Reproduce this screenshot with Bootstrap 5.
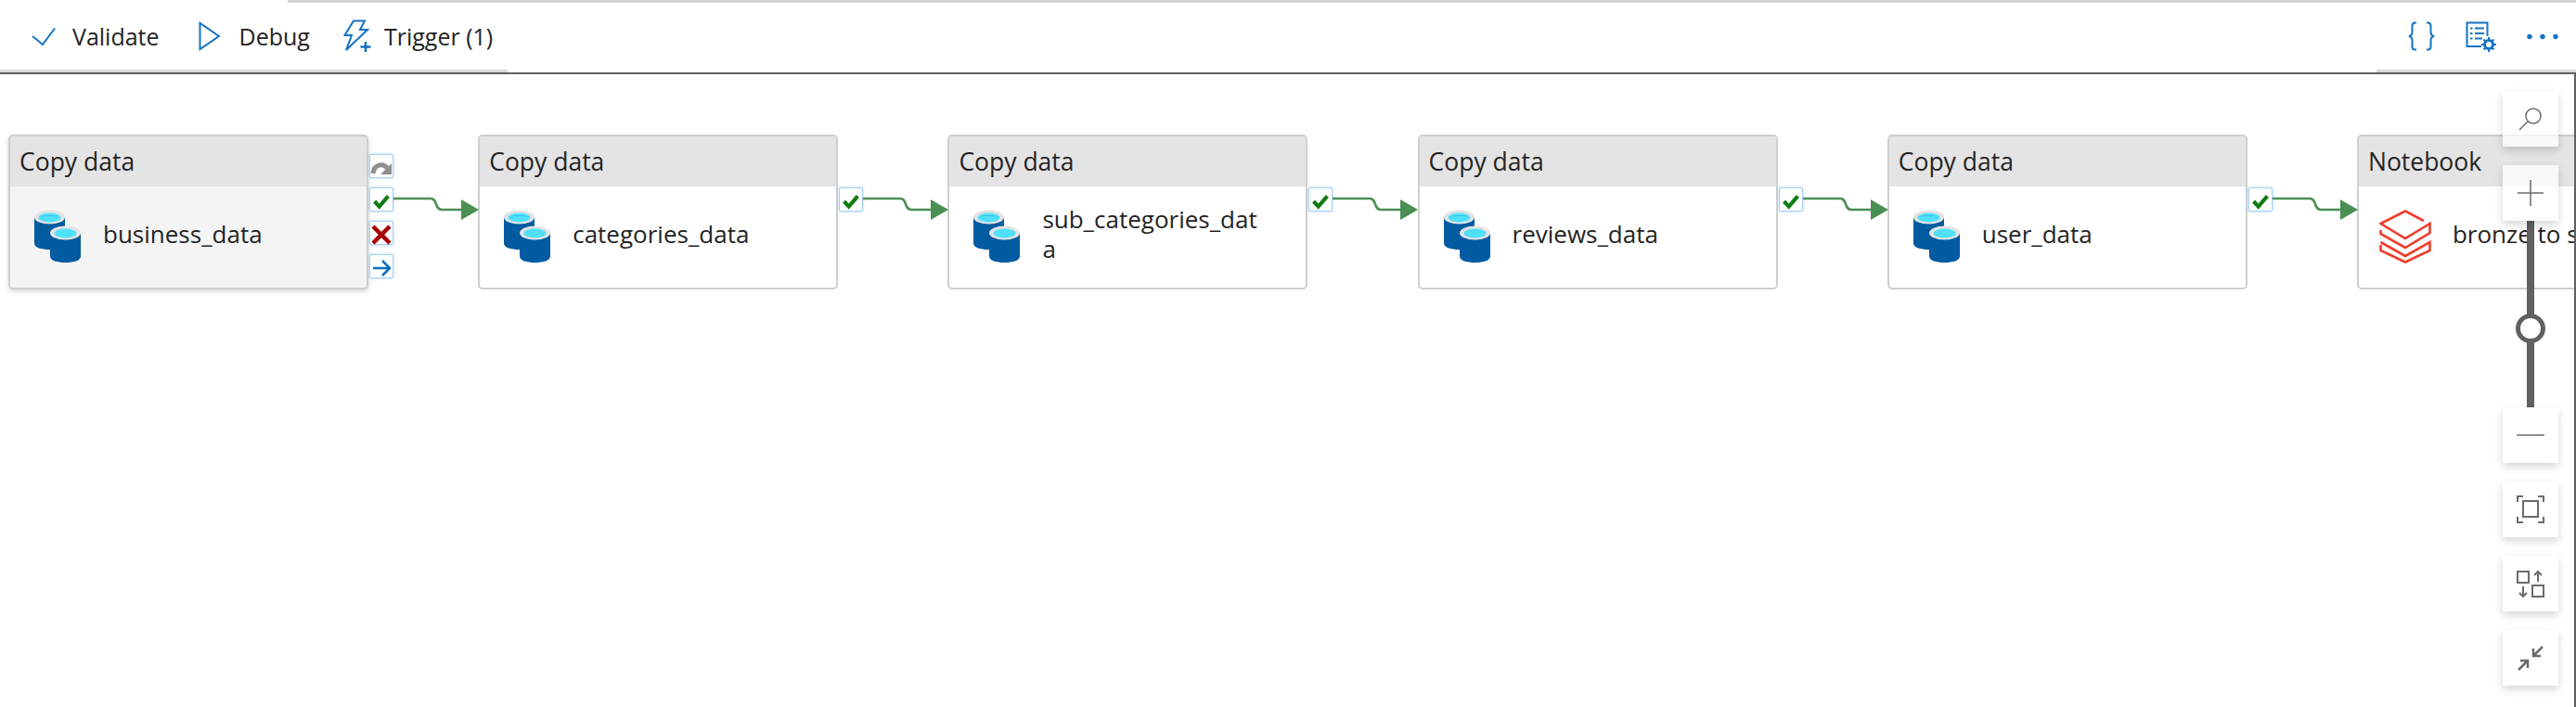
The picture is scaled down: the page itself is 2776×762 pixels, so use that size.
<!DOCTYPE html>
<html lang="en">
<head>
  <meta charset="UTF-8">
  <title>Pipeline canvas</title>
  <link href="https://cdn.jsdelivr.net/npm/bootstrap@5.3.0/dist/css/bootstrap.min.css" rel="stylesheet">
  <style>
    html, body { height: 100%; }
    body { font-family: "Open Sans", "Noto Sans", sans-serif; color: #242424; overflow: hidden; background: #fff; }
    .tab-edge { height: 3px; margin-left: 310px; background: #d2d2d2; }
    .toolbar { height: 75px; }
    .tool-left, .tool-right { height: 75px; border-bottom: 3px solid #d9d9d9; }
    .tool-left { width: 547px; padding-left: 34px; }
    .tool-right { width: 215px; padding-left: 34px; padding-right: 18px; }
    .tool-btn { font-size: 25px; line-height: 1; white-space: nowrap; }
    .tool-btn svg { display: block; flex: none; }
    .ico-gap-a { margin-right: 18px; }
    .ico-gap-b { margin-right: 20px; }
    .ico-gap-c { margin-right: 14px; }
    .gap-validate { margin-right: 42px; }
    .gap-debug { margin-right: 35px; }
    .canvas-pane { height: 684px; border-top: 2px solid #616161; border-right: 2px solid #616161; position: relative; overflow: hidden; }
    .flow-row { padding: 65px 0 0 9px; width: 3200px; }
    .pipe-node { width: 388px; height: 167px; flex: none; border: 2px solid #cfcfcf; border-radius: 5px; background: #fff; overflow: hidden; }
    .pipe-node.active-node { background: #f4f4f4; box-shadow: 0 2px 5px rgba(0,0,0,.18); }
    .node-head { height: 54px; background: #e4e4e4; font-size: 26.5px; line-height: 54px; padding-left: 10px; white-space: nowrap; }
    .node-body { height: 109px; padding-left: 26px; padding-bottom: 2px; }
    .node-name { font-size: 26px; line-height: 32px; margin-left: 24px; margin-bottom: 5px; width: 240px; word-break: break-all; }
    .nb-body { padding-left: 22px; }
    .nb-body .node-name { margin-left: 23px; }
    .pipe-link { width: 118.2px; height: 167px; flex: none; position: relative; }
    .port-col { position: absolute; left: 1px; top: 21px; gap: 10px; }
    .port { width: 26px; height: 26px; background: #fff; border: 1px solid #a6d0f2; border-radius: 2px; box-shadow: 0 0 3px rgba(70,150,230,.45); }
    .port-spacer { width: 26px; height: 26px; }
    .wire { position: absolute; left: 27px; top: 58px; }
    .zoom-ctl { position: absolute; top: 18px; right: 17px; width: 60px; }
    .zoom-btn { width: 60px; height: 60px; background: rgba(255,255,255,.72); box-shadow: 0 4px 9px rgba(0,0,0,.16); position: relative; z-index: 2; }
    .zoom-sep { margin-top: 20px; }
    .slider-track { width: 8px; height: 201px; background: #616161; position: relative; }
    .slider-thumb { width: 32px; height: 32px; border: 5px solid #616161; border-radius: 50%; background: #fff; position: absolute; left: -12px; top: 100px; }
  </style>
</head>
<body>
  <svg width="0" height="0" class="position-absolute">
    <symbol id="ico-db" viewBox="0 0 50 57">
      <path d="M0 8H33V36C33 41 25 43 16.500 43S0 41 0 36Z" fill="#005ba1"/>
      <ellipse cx="16.500" cy="8" rx="16.500" ry="7.500" fill="#e3e3e3"/>
      <ellipse cx="16.500" cy="8.500" rx="12" ry="5" fill="#50e0fa"/>
      <path d="M6 8.500C8 6 25 6 27 8.500C24 5 9 5 6 8.500Z" fill="#2ab0d8"/>
      <path d="M17 25H50V50C50 55 42 57 33.500 57S17 55 17 50Z" fill="#005ba1"/>
      <ellipse cx="33.500" cy="25" rx="16.500" ry="7.500" fill="#e3e3e3"/>
      <ellipse cx="33.500" cy="25.500" rx="12" ry="5" fill="#50e0fa"/>
    </symbol>
    <symbol id="ico-check" viewBox="0 0 26 26">
      <path d="M5 13L10.500 19L21 7" fill="none" stroke="#107c10" stroke-width="4.500"/>
    </symbol>
  </svg>

  <div class="tab-edge"></div>
  <div class="toolbar d-flex">
    <div class="tool-left d-flex align-items-center">
      <div class="tool-btn d-flex align-items-center gap-validate">
        <svg width="26" height="20" viewBox="0 0 26 20" class="ico-gap-a"><path d="M1 10L12 19L25 1.500" fill="none" stroke="#1472c4" stroke-width="2"/></svg>
        <span>Validate</span>
      </div>
      <div class="tool-btn d-flex align-items-center gap-debug">
        <svg width="24" height="32" viewBox="0 0 24 32" class="ico-gap-b"><path d="M1.500 2V30L22 16Z" fill="none" stroke="#1472c4" stroke-width="2"/></svg>
        <span>Debug</span>
      </div>
      <div class="tool-btn d-flex align-items-center">
        <svg width="31" height="36" viewBox="0 0 31 36" class="ico-gap-c"><path d="M12 1.500H24L19 11H27L4 33L10 17H2.500Z" fill="none" stroke="#1472c4" stroke-width="2"/><path d="M25 24V35M19.500 29.500H30.500" stroke="#1472c4" stroke-width="2.500"/></svg>
        <span>Trigger (1)</span>
      </div>
    </div>
    <div class="flex-grow-1"></div>
    <div class="tool-right d-flex align-items-center">
      <svg width="29" height="32" viewBox="0 0 29 32"><path d="M9 1.500H7.500C5 1.500 4.500 3 4.500 5V12C4.500 14 3.500 15.500 1 16C3.500 16.500 4.500 18 4.500 20V27C4.500 29 5 30.500 7.500 30.500H9M20 1.500H21.500C24 1.500 24.500 3 24.500 5V12C24.500 14 25.500 15.500 28 16C25.500 16.500 24.500 18 24.500 20V27C24.500 29 24 30.500 21.500 30.500H20" fill="none" stroke="#1472c4" stroke-width="2"/></svg>
      <svg width="33" height="33" viewBox="0 0 33 33" class="ms-auto me-auto"><path d="M17 27H1.500V1.500H23.500V16" fill="none" stroke="#1472c4" stroke-width="2"/><path d="M5 7.500H7.500M5 13H7.500M5 18.500H7.500" stroke="#1472c4" stroke-width="2"/><path d="M10 7.500H20M10 13H20M10 18.500H18" stroke="#1472c4" stroke-width="2"/><circle cx="25" cy="25" r="4.500" fill="none" stroke="#1472c4" stroke-width="3"/><path d="M25 17V20M25 30V33M17 25H20M30 25H33M19.500 19.500L21.500 21.500M28.500 28.500L30.500 30.500M19.500 30.500L21.500 28.500M28.500 21.500L30.500 19.500" stroke="#1472c4" stroke-width="2"/></svg>
      <svg width="35" height="7" viewBox="0 0 35 7"><circle cx="3" cy="3.500" r="2.700" fill="#1472c4"/><circle cx="17" cy="3.500" r="2.700" fill="#1472c4"/><circle cx="31" cy="3.500" r="2.700" fill="#1472c4"/></svg>
    </div>
  </div>

  <div class="canvas-pane">
    <div class="flow-row d-flex">
      <div class="pipe-node active-node">
        <div class="node-head">Copy data</div>
        <div class="node-body d-flex align-items-center">
          <svg width="50" height="57"><use href="#ico-db"/></svg>
          <div class="node-name">business_data</div>
        </div>
      </div>
      <div class="pipe-link">
        <div class="port-col d-flex flex-column">
          <div class="port"><svg width="24" height="24" viewBox="0 0 24 24"><path d="M3 18C4 8 14 6 19 13" fill="none" stroke="#8f8f8f" stroke-width="5"/><path d="M23 7V19H11Z" fill="#8f8f8f"/></svg></div>
          <div class="port"><svg width="24" height="24"><use href="#ico-check"/></svg></div>
          <div class="port"><svg width="24" height="24" viewBox="0 0 24 24"><path d="M3 3L21 21M21 3L3 21" stroke="#a80000" stroke-width="4.500"/></svg></div>
          <div class="port"><svg width="24" height="24" viewBox="0 0 24 24"><path d="M3 12H21M13 4L21 12L13 20" fill="none" stroke="#106ebe" stroke-width="2.500"/></svg></div>
        </div>
        <svg class="wire" width="92" height="34" viewBox="0 0 92 34"><path d="M0 11H40C48 11 44 23 52 23H76" fill="none" stroke="#4a8f53" stroke-width="2.500"/><path d="M73 1L92 12 73 23Z" transform="translate(0 11)" fill="#4a8f53"/></svg>
      </div>

      <div class="pipe-node">
        <div class="node-head">Copy data</div>
        <div class="node-body d-flex align-items-center">
          <svg width="50" height="57"><use href="#ico-db"/></svg>
          <div class="node-name">categories_data</div>
        </div>
      </div>
      <div class="pipe-link">
        <div class="port-col d-flex flex-column">
          <div class="port-spacer"></div>
          <div class="port"><svg width="24" height="24"><use href="#ico-check"/></svg></div>
        </div>
        <svg class="wire" width="92" height="34" viewBox="0 0 92 34"><path d="M0 11H40C48 11 44 23 52 23H76" fill="none" stroke="#4a8f53" stroke-width="2.500"/><path d="M73 1L92 12 73 23Z" transform="translate(0 11)" fill="#4a8f53"/></svg>
      </div>

      <div class="pipe-node">
        <div class="node-head">Copy data</div>
        <div class="node-body d-flex align-items-center">
          <svg width="50" height="57"><use href="#ico-db"/></svg>
          <div class="node-name">sub_categories_data</div>
        </div>
      </div>
      <div class="pipe-link">
        <div class="port-col d-flex flex-column">
          <div class="port-spacer"></div>
          <div class="port"><svg width="24" height="24"><use href="#ico-check"/></svg></div>
        </div>
        <svg class="wire" width="92" height="34" viewBox="0 0 92 34"><path d="M0 11H40C48 11 44 23 52 23H76" fill="none" stroke="#4a8f53" stroke-width="2.500"/><path d="M73 1L92 12 73 23Z" transform="translate(0 11)" fill="#4a8f53"/></svg>
      </div>

      <div class="pipe-node">
        <div class="node-head">Copy data</div>
        <div class="node-body d-flex align-items-center">
          <svg width="50" height="57"><use href="#ico-db"/></svg>
          <div class="node-name">reviews_data</div>
        </div>
      </div>
      <div class="pipe-link">
        <div class="port-col d-flex flex-column">
          <div class="port-spacer"></div>
          <div class="port"><svg width="24" height="24"><use href="#ico-check"/></svg></div>
        </div>
        <svg class="wire" width="92" height="34" viewBox="0 0 92 34"><path d="M0 11H40C48 11 44 23 52 23H76" fill="none" stroke="#4a8f53" stroke-width="2.500"/><path d="M73 1L92 12 73 23Z" transform="translate(0 11)" fill="#4a8f53"/></svg>
      </div>

      <div class="pipe-node">
        <div class="node-head">Copy data</div>
        <div class="node-body d-flex align-items-center">
          <svg width="50" height="57"><use href="#ico-db"/></svg>
          <div class="node-name">user_data</div>
        </div>
      </div>
      <div class="pipe-link">
        <div class="port-col d-flex flex-column">
          <div class="port-spacer"></div>
          <div class="port"><svg width="24" height="24"><use href="#ico-check"/></svg></div>
        </div>
        <svg class="wire" width="92" height="34" viewBox="0 0 92 34"><path d="M0 11H40C48 11 44 23 52 23H76" fill="none" stroke="#4a8f53" stroke-width="2.500"/><path d="M73 1L92 12 73 23Z" transform="translate(0 11)" fill="#4a8f53"/></svg>
      </div>

      <div class="pipe-node">
        <div class="node-head">Notebook</div>
        <div class="node-body nb-body d-flex align-items-center">
          <svg width="56" height="58" viewBox="0 0 56 58" fill="none" stroke="#ee3d2c" stroke-width="2.600"><path d="M48 12L28 1.500L1.500 15L28 31L54.500 15V25L28 41L1.500 26V22"/><path d="M1.500 35L28 50L54.500 35V44L28 56.500L1.500 44V38"/></svg>
          <div class="node-name">bronze to silver</div>
        </div>
      </div>
    </div>

    <div class="zoom-ctl d-flex flex-column align-items-center">
      <div class="zoom-btn d-flex align-items-center justify-content-center">
        <svg width="26" height="26" viewBox="0 0 26 26" fill="none" stroke="#6b6b6b" stroke-width="1.500"><circle cx="16" cy="10" r="8"/><path d="M10 16L1 25"/></svg>
      </div>
      <div class="zoom-btn zoom-sep d-flex align-items-center justify-content-center">
        <svg width="30" height="30" viewBox="0 0 30 30" stroke="#6b6b6b" stroke-width="1.500"><path d="M15 1V29M1 15H29"/></svg>
      </div>
      <div class="slider-track"><div class="slider-thumb"></div></div>
      <div class="zoom-btn d-flex align-items-center justify-content-center">
        <svg width="30" height="4" viewBox="0 0 30 4" stroke="#6b6b6b" stroke-width="1.500"><path d="M0 2H30"/></svg>
      </div>
      <div class="zoom-btn zoom-sep d-flex align-items-center justify-content-center">
        <svg width="30" height="30" viewBox="0 0 30 30" fill="none" stroke="#6b6b6b" stroke-width="2"><path d="M1 7V1H7M23 1H29V7M29 23V29H23M7 29H1V23"/><rect x="7" y="6" width="16" height="17"/></svg>
      </div>
      <div class="zoom-btn zoom-sep d-flex align-items-center justify-content-center">
        <svg width="30" height="30" viewBox="0 0 30 30" fill="none" stroke="#6b6b6b" stroke-width="2"><rect x="1" y="2" width="12" height="12"/><rect x="17" y="17" width="12" height="12"/><path d="M23 13V2M19 6L23 2L27 6M7 18V29M3 25L7 29L11 25"/></svg>
      </div>
      <div class="zoom-btn zoom-sep d-flex align-items-center justify-content-center">
        <svg width="28" height="28" viewBox="0 0 28 28" fill="none" stroke="#6b6b6b" stroke-width="2.500"><path d="M27 2L17 12M17 4V12H25M1 27L11 17M3 17H11V25"/></svg>
      </div>
    </div>
  </div>

  <script src="https://cdn.jsdelivr.net/npm/bootstrap@5.3.0/dist/js/bootstrap.bundle.min.js"></script>
</body>
</html>
